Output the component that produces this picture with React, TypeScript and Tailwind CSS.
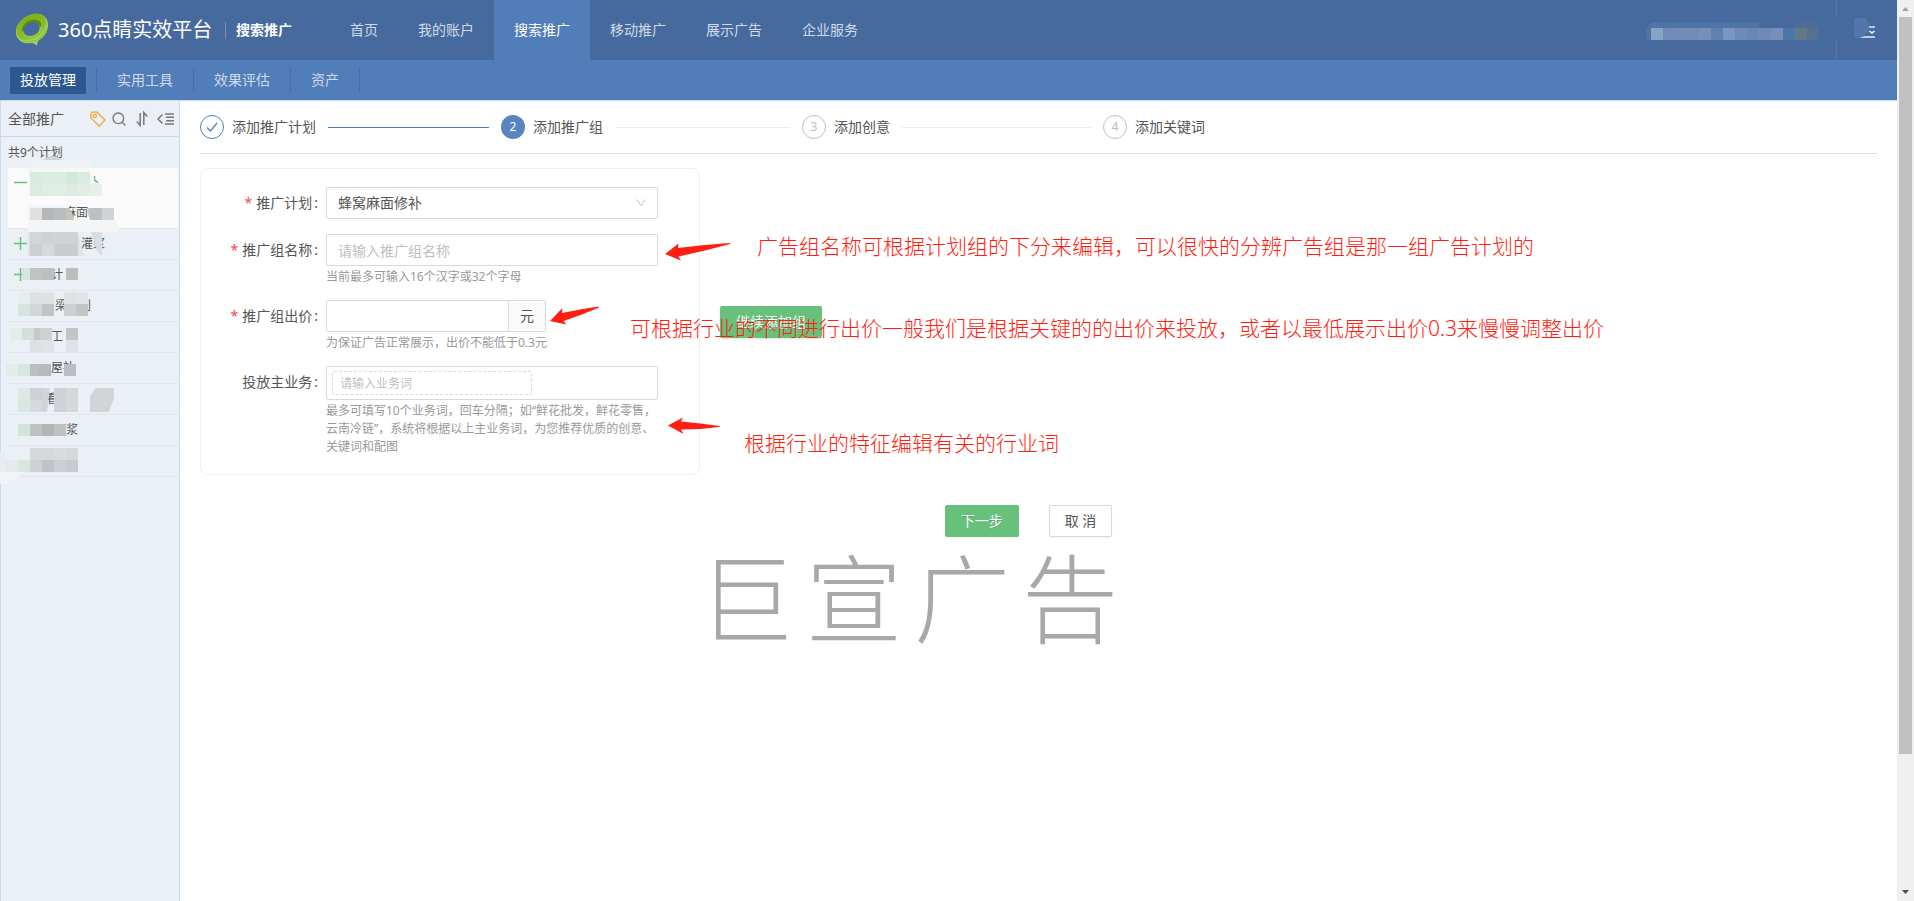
import { Search } from "lucide-react";

const topNav = ["首页", "我的账户", "搜索推广", "移动推广", "展示广告", "企业服务"];
const subNav = ["实用工具", "效果评估", "资产"];
const steps = ["添加推广计划", "添加推广组", "添加创意", "添加关键词"];

// Visible part of each plan name, the rest is masked
const plans = [
    { text: "灌浆", pad: "pl-[73px]", icon: true },
    { text: "计", pad: "pl-[43px]", icon: true },
    { text: "梁计划", pad: "pl-[47px]" },
    { text: "工", pad: "pl-[43px]" },
    { text: "屋补", pad: "pl-[43px]" },
    { text: "看", pad: "pl-[38px]" },
    { text: "浆", pad: "pl-[58px]" },
    { text: "", pad: "pl-[43px]" },
];

type Strip = { x: number; y: number; h: number; cells: string[] };

const sidebarMask: Strip[] = [
    { x: 30, y: 71, h: 12, cells: ["#d9ebe0", "#dbece2", "#dbece2", "#d2e8d8", "#d9ecdf"] },
    { x: 30, y: 83, h: 12, cells: ["#dcebe0", "#dfede3", "#e1eee5", "#dcece1", "#e0eee4", "#e6f0e8"] },
    { x: 30, y: 107, h: 12, cells: ["#e1e0df", "#b4b6b9", "#babcbd"] },
    { x: 90, y: 107, h: 12, cells: ["#bebfc1", "#d2d3d4"] },
    { x: 30, y: 131, h: 12, cells: ["#d2d6d9", "#ced2d6", "#d1d4d7", "#d0d3d6"] },
    { x: 30, y: 143, h: 12, cells: ["#cdced2", "#d6d8da", "#c9cdd1", "#c9cdd0"] },
    { x: 30, y: 167, h: 12, cells: ["#bfc3c2", "#bcc0c1"] },
    { x: 66, y: 167, h: 12, cells: ["#bbbdbd"] },
    { x: 18, y: 191, h: 12, cells: ["#e5edee", "#dde1e4", "#dfe2e5"] },
    { x: 64, y: 191, h: 12, cells: ["#dfe2e5", "#e2e5e8"] },
    { x: 18, y: 203, h: 12, cells: ["#d6e6df", "#d2d6d8", "#c2c3c6"] },
    { x: 64, y: 203, h: 12, cells: ["#cdd0d3", "#c3c6c5"] },
    { x: 10, y: 227, h: 12, cells: ["#e3ece9", "#d2dfda", "#c6c9c8"] },
    { x: 40, y: 227, h: 12, cells: ["#cfd0d4"] },
    { x: 66, y: 227, h: 12, cells: ["#c3c4c6"] },
    { x: 30, y: 239, h: 12, cells: ["#dde0e4", "#e0e3e6"] },
    { x: 66, y: 239, h: 12, cells: ["#dfe2e6"] },
    { x: 6, y: 263, h: 12, cells: ["#e3ece9", "#d5e7df", "#bcbec0"] },
    { x: 39, y: 263, h: 12, cells: ["#b9babe"] },
    { x: 64, y: 263, h: 12, cells: ["#bcbdc0"] },
    { x: 18, y: 287, h: 12, cells: ["#dce9e5", "#cdd0d4"] },
    { x: 54, y: 287, h: 24, cells: ["#cfd2d6", "#d4d8db"] },
    { x: 18, y: 299, h: 12, cells: ["#d9e7e2", "#d6dade"] },
    { x: 18, y: 323, h: 12, cells: ["#d0e4da", "#c0c1c3", "#b1b5b8", "#bfc1c3"] },
    { x: 30, y: 347, h: 12, cells: ["#d5d9dc", "#d6d8dc", "#d9dcdf", "#d5d9dc"] },
    { x: 6, y: 359, h: 12, cells: ["#e3eae9", "#d7e6df", "#cfd1d6", "#c2c3c8", "#cccfd2", "#c9cacf"] },
];

const accountCells = [
    "#87a4c5", "#708bb7", "#728cb8", "#728cb8", "#778fb9", "#6180b1", "#7899bf",
    "#7189b7", "#6a86b3", "#6e8ab6", "#778fb9", "#4e75a7", "#647787", "#56708f",
];

const Mosaic = ({ strips }: { strips: Strip[] }) => (
    <>
        {strips.map((s) =>
            s.cells.map((fill, i) => (
                <rect key={`${s.x}-${s.y}-${i}`} x={s.x + i * 12} y={s.y} width="12" height={s.h} fill={fill} />
            ))
        )}
    </>
);

const Logo = () => (
    <svg className="size-9" viewBox="0 0 36 36" aria-hidden="true">
        <defs>
            <linearGradient id="ring" x1="0" y1="0" x2="0.6" y2="1">
                <stop offset="0" stopColor="#79a815" />
                <stop offset="0.55" stopColor="#86b81c" />
                <stop offset="1" stopColor="#8cc63f" />
            </linearGradient>
        </defs>
        <path
            d="M20 2C28 0.500 34 5 34 13C34 20 30 25.500 24.500 28.500C23.500 30 23 32 23 34C22 33 21.500 32 18.500 31C11 32.500 3 29.500 2 21.500C1 12.500 10 3.500 20 2Z"
            fill="#a5d35a"
        />
        <path
            d="M20 2C27.500 0.500 33 4.500 32 11.500C31 18.500 26 24.500 18.500 27C11 29.500 3.500 27.500 2.500 20.500C1.800 12.500 10 3.500 20 2Z"
            fill="url(#ring)"
        />
        <path d="M4 24C8 30 16 30 22 27.500C28 24.500 32.500 18.500 33 11C34.500 20 29 27 22 29.500C15 31.500 7 30.500 4 24Z" fill="#8cc540" />
        <ellipse cx="18" cy="16.500" rx="10.500" ry="8" transform="rotate(-28 18 16.500)" fill="#9dca3a" />
        <path d="M8 19C8 12 14 7.500 20 7.500C26 7.500 28.500 11 27 15.500L25.500 14C24 10.500 19 10 15 12C11 14 9.500 17 9.500 20Z" fill="#5d8c0e" />
        <ellipse cx="17.500" cy="17" rx="8.500" ry="6.700" transform="rotate(-24 17.500 17)" fill="#466a9d" />
    </svg>
);

const Header = () => (
    <header>
        <div className="flex h-[60px] items-center bg-[#466a9d] pl-3.5">
            <Logo />
            <span className="ml-2 w-[157px] whitespace-nowrap text-xl text-white">360点睛实效平台</span>
            <span className="ml-2.5 h-[17px] w-px bg-[#7590b8]" />
            <strong className="ml-2.5 text-sm text-white">搜索推广</strong>
            <nav className="ml-[38px] flex h-full">
                {topNav.map((item) => (
                    <a
                        key={item}
                        href="#"
                        className={
                            item === "搜索推广"
                                ? "flex items-center bg-[#517db9] px-5 text-sm text-white"
                                : "flex items-center px-5 text-sm text-[#d0daea]"
                        }
                    >
                        {item}
                    </a>
                ))}
            </nav>
            <svg className="ml-auto mr-[17px] h-5 w-[174px]" viewBox="0 0 174 20" aria-hidden="true">
                <path d="M8 2H114V8H6V20H2Q-2 12 6 3Z" fill="#4f74a7" />
                <path d="M150 2L174 0V8H150Z" fill="#4d6c96" />
                <Mosaic strips={[{ x: 6, y: 8, h: 12, cells: accountCells }]} />
            </svg>
            <div className="flex h-full w-[61px] flex-col justify-between">
                <span className="h-4 w-px bg-[#5878a8]" />
                <button type="button" aria-label="菜单" className="ml-[18px] h-5 w-[22px]">
                    <svg viewBox="0 0 22 20" className="h-5 w-[22px]">
                        <path d="M14 8H21V10H14ZM6 18H21V20H6Z" fill="#bccbe0" />
                        <path d="M15.500 13L18 15L20.500 13" stroke="#fff" strokeWidth="1.500" fill="none" />
                        <path d="M0 0H12Q16 6 15 13Q11 19 5 20H0Z" fill="#5176ab" />
                    </svg>
                </button>
                <span className="h-5 w-px bg-[#5878a8]" />
            </div>
        </div>
        <nav className="flex h-10 items-center bg-[#517db9] pl-2.5 pb-1">
            <a href="#" className="mt-1 mr-2.5 flex h-[27px] items-center bg-[#2c588f] px-2.5 text-sm text-white">
                投放管理
            </a>
            {subNav.map((item) => (
                <a
                    key={item}
                    href="#"
                    className="mt-1 flex h-6 items-center border-l border-[#466fa9] px-5 text-sm text-[#d0dcee] last:border-r"
                >
                    {item}
                </a>
            ))}
        </nav>
    </header>
);

const Toggle = ({ open }: { open?: boolean }) => (
    <svg className="absolute left-1.5 top-2 size-[13px]" viewBox="0 0 13 13" aria-hidden="true">
        <path d={open ? "M0 6.500H13" : "M0 6.500H13M6.500 0V13"} stroke="#68c17c" strokeWidth="1.500" />
    </svg>
);

const Sidebar = () => (
    <aside className="relative w-[180px] shrink-0 border-x border-[#c9dcee] bg-[#eaf0f5] text-[#555]">
        <div className="mr-px flex h-9 items-center border-b border-[#ccd8e2] pl-[7px]">
            <h2 className="text-sm">全部推广</h2>
            <div className="ml-auto mr-1 flex items-center gap-[5px]">
                <button type="button" aria-label="标签">
                    <svg className="size-4" viewBox="0 0 16 16" fill="none" stroke="#f8a63a" strokeWidth="1.300">
                        <path d="M1 2.500V7L9.200 15L15 9L7 1.200H2Z" />
                        <circle cx="4.800" cy="5" r="1.600" />
                    </svg>
                </button>
                <button type="button" aria-label="搜索">
                    <Search className="size-4 text-[#777]" strokeWidth={2} />
                </button>
                <button type="button" aria-label="排序" className="ml-1">
                    <svg className="h-4 w-3" viewBox="0 0 12 16" fill="none" stroke="#777" strokeWidth="1.500">
                        <path d="M4.200 2V14.500L0.800 10.500M7.800 14V1.500L11.200 5.500" />
                    </svg>
                </button>
                <button type="button" aria-label="收起" className="ml-1">
                    <svg className="h-4 w-[17px]" viewBox="0 0 17 16" fill="none" stroke="#777" strokeWidth="1.500">
                        <path d="M5.500 3.500L1 8L5.500 12.500M8 3H17M9 6.300H17M9 9.700H17M8 13H17" />
                    </svg>
                </button>
            </div>
        </div>
        <p className="flex h-[31px] items-center pl-[7px] text-xs">共9个计划</p>
        <ul className="ml-[7px] mr-px text-xs">
            <li className="relative h-[61px] border-b border-[#e2e7eb] bg-[#fafafa]">
                <Toggle open />
                <p className="flex h-[30px] items-center pl-[79px] text-[#4aad62]">补</p>
                <p className="flex h-[30px] items-center pl-14">麻面</p>
            </li>
            {plans.map((plan, i) => (
                <li key={i} className="relative h-[31px] border-b border-[#e1e7ec]">
                    {plan.icon && <Toggle />}
                    <p className={`flex h-[30px] items-center ${plan.pad}`}>{plan.text}</p>
                </li>
            ))}
        </ul>
        {/* blurred out account data */}
        <svg className="pointer-events-none absolute -left-px top-0 h-[400px] w-[178px]" viewBox="0 0 178 400" aria-hidden="true">
            <path d="M43 59Q52 51 62 59Z" fill="#cdd2d6" />
            <path d="M28 67Q30 59 40 59H88L92 67Z" fill="#eef2f5" />
            <path d="M28 67H88L102 95H30Z" fill="#f3f7f5" />
            <path d="M28 104H68L74 119H28Z" fill="#f4f5f6" />
            <path d="M66 107H70L74 119H66Z" fill="#c4c3be" />
            <path d="M86 107H112L114 119H90Z" fill="#c9cacc" />
            <path d="M28 119H116L119 131H28Z" fill="#f3f5f7" />
            <path d="M28 131H78L84 155H28Z" fill="#dfe4e8" />
            <path d="M91 131H102V155L97 150Z" fill="#d8dde0" />
            <path d="M22 167H30V179H22Z" fill="#d4e6df" />
            <path d="M96 287H114V297L109 311H90V295Z" fill="#d1d5d7" />
            <path d="M42 287H50L47 311H42Z" fill="#d1d4d8" />
            <path d="M0 371V352L6 350V371Z" fill="#e6ecf0" />
            <path d="M0 371H24L8 382L6 383H0Z" fill="#f0f4f7" />
            <Mosaic strips={sidebarMask} />
        </svg>
    </aside>
);

const Steps = () => (
    <ol className="flex h-[53px] border-b border-[#dcdcdc] text-sm text-[#555]">
        {steps.map((label, i) => (
            <li key={label} className={i < 3 ? "flex h-[52px] w-[301px] items-center" : "flex h-[52px] items-center"}>
                {i === 0 && (
                    <span className="flex size-6 items-center justify-center rounded-full border border-[#517db9]">
                        <svg className="size-3" viewBox="0 0 12 12" fill="none" stroke="#517db9" strokeWidth="1.200">
                            <path d="M1 6.500L4.500 10L11 2" />
                        </svg>
                    </span>
                )}
                {i === 1 && (
                    <span className="flex size-6 items-center justify-center rounded-full bg-[#5984be] text-xs text-white">2</span>
                )}
                {i > 1 && (
                    <span className="flex size-6 items-center justify-center rounded-full border border-[#c0c0c0] text-xs text-[#bbb]">
                        {i + 1}
                    </span>
                )}
                <span className="ml-2">{label}</span>
                {i < 3 && <span className={i === 0 ? "mx-3 h-px flex-1 bg-[#517db9]" : "mx-3 h-px flex-1 bg-[#ececec]"} />}
            </li>
        ))}
    </ol>
);

interface LabelProps {
    htmlFor: string;
    text: string;
    required?: boolean;
}

const Label = ({ htmlFor, text, required }: LabelProps) => (
    <label htmlFor={htmlFor} className="flex h-8 w-[125px] shrink-0 items-center justify-end pr-2 text-sm text-[#555]">
        {required && <span className="mr-1 text-[#f5494c]">*</span>}
        {text}
        <span className="ml-0.5">:</span>
    </label>
);

const Form = () => (
    <form className="w-[500px] rounded-lg border border-[#efefef] pt-[18px] pb-[18px]">
        <div className="flex">
            <Label htmlFor="plan" text="推广计划" required />
            <div className="relative">
                <select
                    id="plan"
                    className="h-8 w-[332px] appearance-none rounded-xs border border-[#d9d9d9] bg-white px-[11px] text-sm text-[#555]"
                >
                    <option>蜂窝麻面修补</option>
                </select>
                <svg className="pointer-events-none absolute right-3 top-3 h-2 w-2.5" viewBox="0 0 10 8" fill="none" stroke="#bfbfbf">
                    <path d="M0.500 0.500L5 6.500L9.500 0.500" />
                </svg>
            </div>
        </div>
        <div className="mt-[15px] flex">
            <Label htmlFor="group" text="推广组名称" required />
            <div>
                <input
                    id="group"
                    placeholder="请输入推广组名称"
                    className="block h-8 w-[332px] rounded-xs border border-[#d9d9d9] px-[11px] text-sm placeholder:text-[#bfbfbf]"
                />
                <p className="mt-0.5 text-xs leading-[18px] text-[#999]">当前最多可输入16个汉字或32个字母</p>
            </div>
        </div>
        <div className="mt-3.5 flex">
            <Label htmlFor="price" text="推广组出价" required />
            <div>
                <div className="flex h-8 w-[220px] rounded-xs border border-[#d9d9d9]">
                    <input id="price" className="min-w-0 flex-1 px-[11px] text-sm" />
                    <span className="flex w-[37px] items-center justify-center border-l border-[#d9d9d9] bg-[#fafafa] text-sm text-[#555]">
                        元
                    </span>
                </div>
                <p className="mt-0.5 text-xs leading-[18px] text-[#999]">为保证广告正常展示，出价不能低于0.3元</p>
            </div>
        </div>
        <div className="mt-3.5 flex">
            <Label htmlFor="business" text="投放主业务" />
            <div className="w-[332px]">
                <div className="h-[34px] rounded-xs border border-[#d9d9d9] p-1 pl-[5px]">
                    <input
                        id="business"
                        placeholder="请输入业务词"
                        className="block h-6 w-[200px] rounded-xs border border-dashed border-[#d9d9d9] px-[7px] text-xs placeholder:text-[#bfbfbf]"
                    />
                </div>
                <p className="mt-0.5 text-xs leading-[18px] text-[#999]">
                    最多可填写10个业务词，回车分隔；如“鲜花批发，鲜花零售，
                    <br />
                    云南冷链”，系统将根据以上主业务词，为您推荐优质的创意、
                    <br />
                    关键词和配图
                </p>
            </div>
        </div>
    </form>
);

// Red hand-written notes lying over the form
const Annotations = () => (
    <div className="pointer-events-none text-[21px] leading-8 font-light whitespace-nowrap text-[#ff1e10]">
        <svg className="absolute left-[465px] top-[75px] h-[18px] w-[66px]" viewBox="0 0 66 18" fill="currentColor">
            <path d="M0 11L13.500 0.500L13 5Q40 1.500 65 0V1Q40 8 13.500 13.500L16 17.500Z" />
        </svg>
        <p className="absolute left-[557px] top-[62px]">
            广告组名称可根据计划组的下分来编辑，可以很快的分辨广告组是那一组广告计划的
        </p>
        <svg className="absolute left-[350px] top-[138px] h-[20px] w-[50px]" viewBox="0 0 50 20" fill="currentColor">
            <path d="M0 15L12.500 2L12 7Q30 3 49 0.500V1.500Q32 9 13.500 15L16.500 18.500Z" />
        </svg>
        <p className="absolute left-[430px] top-[144px]">
            可根据行业的不同进行出价一般我们是根据关键的的出价来投放，或者以最低展示出价0.3来慢慢调整出价
        </p>
        <svg className="absolute left-[468px] top-[249px] h-[18px] w-[52px]" viewBox="0 0 52 18" fill="currentColor">
            <path d="M0 8.500L15 0.500L13 4.500Q32 6 51.500 9V10Q32 12.500 13 12.500L15.500 17Z" />
        </svg>
        <p className="absolute left-[544px] top-[259px]">根据行业的特征编辑有关的行业词</p>
        <p className="absolute left-[498px] top-[370px] flex gap-3 text-[96px] leading-[120px] text-[#a8a8a8]">
            <span>巨</span>
            <span>宣</span>
            <span>广</span>
            <span>告</span>
        </p>
    </div>
);

const Scrollbar = () => (
    <div className="flex w-[17px] shrink-0 flex-col items-center bg-[#f0f0f0]" aria-hidden="true">
        <svg className="size-[17px] shrink-0" viewBox="0 0 17 17">
            <path d="M5 11L8.500 7L12 11Z" fill="#a3a3a3" />
        </svg>
        <div className="h-[737px] w-[13px] bg-[#c1c1c1]" />
        <svg className="mt-auto size-[17px] shrink-0" viewBox="0 0 17 17">
            <path d="M5 6L8.500 10L12 6Z" fill="#505050" />
        </svg>
    </div>
);

const App = () => {
    return (
        <div className="flex min-h-screen bg-white font-['Noto_Sans','Noto_Sans_CJK_SC',sans-serif]">
            <div className="flex min-w-0 flex-1 flex-col">
                <Header />
                <div className="flex flex-1 border-t border-[#c9dcee]">
                    <Sidebar />
                    <main className="min-w-0 flex-1 px-5">
                        <Steps />
                        <div className="relative mt-3.5">
                            <div className="flex items-center gap-5">
                                <Form />
                                <button
                                    type="button"
                                    className="h-8 rounded-xs bg-[#67c17b] px-4 text-sm text-white text-shadow-2xs shadow-sm"
                                >
                                    继续添加组
                                </button>
                            </div>
                            <div className="mt-[30px] flex justify-center gap-[30px] pr-5">
                                <button
                                    type="button"
                                    className="h-8 rounded-xs bg-[#67c17b] px-4 text-sm text-white text-shadow-2xs shadow-xs"
                                >
                                    下一步
                                </button>
                                <button
                                    type="button"
                                    className="h-8 rounded-xs border border-[#d9d9d9] bg-white px-[15px] text-sm text-[#555] shadow-xs"
                                >
                                    取 消
                                </button>
                            </div>
                            <Annotations />
                        </div>
                    </main>
                </div>
            </div>
            <Scrollbar />
        </div>
    );
};

export default App;
